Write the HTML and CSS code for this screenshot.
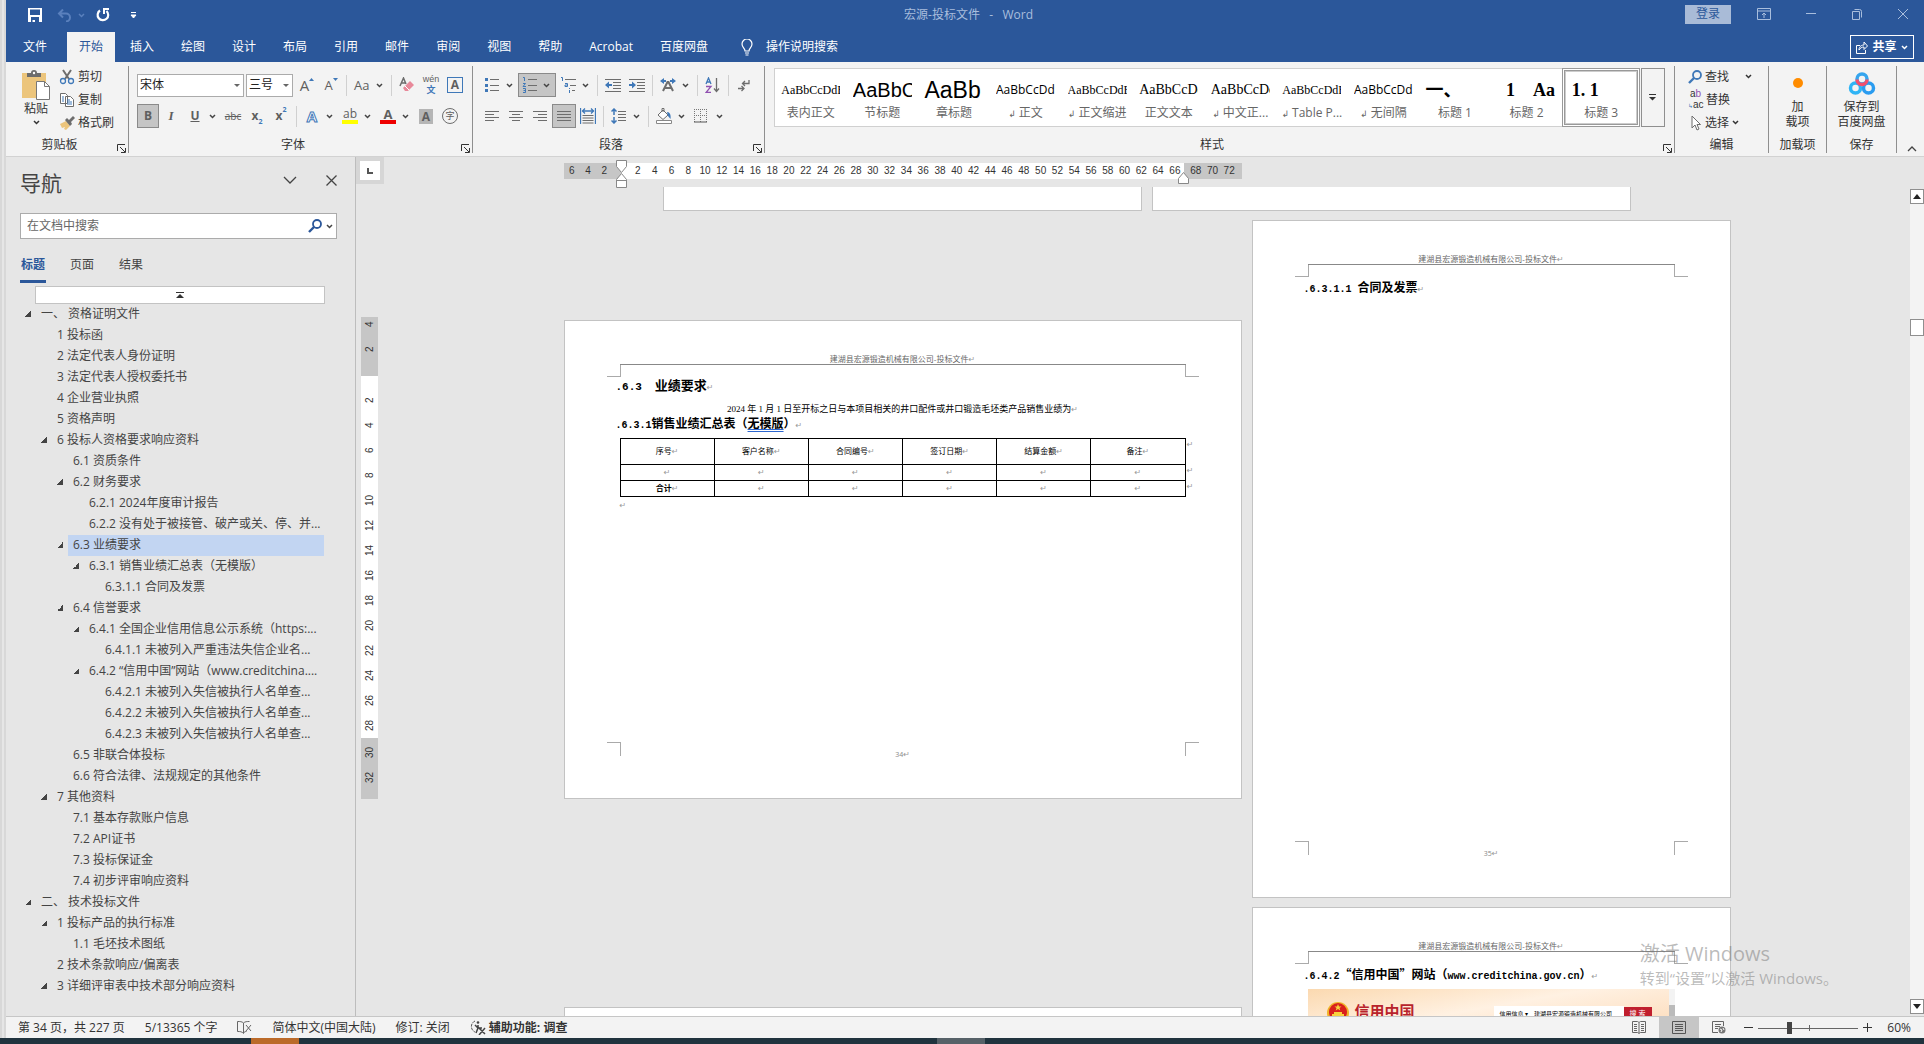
FILE: index.html
```html
<!DOCTYPE html>
<html lang="zh-CN">
  <head>
    <meta charset="UTF-8" />
    <meta name="viewport" content="width=device-width, initial-scale=1.0" />
    <title>宏源-投标文件 - Word</title>
    <link rel="stylesheet" href="styles.css">
  </head>
  <body>
    <!-- shared icons -->
    <svg class="sprite" aria-hidden="true">
      <symbol id="caret" viewBox="0 0 7 5"><path d="M1 1l2.500 2.500L6 1" fill="none" stroke="currentColor" stroke-width="1.500"/></symbol>
      <symbol id="launch" viewBox="0 0 9 9"><path d="M.5 7V.5H8M3 3l5 5M8.500 4v4.500H4" fill="none" stroke="#333"/></symbol>
      <symbol id="lens" viewBox="0 0 14 14"><circle cx="9" cy="5" r="4" fill="none" stroke="currentColor" stroke-width="1.800"/><path d="M6 8l-5 5" stroke="currentColor" stroke-width="2.400"/></symbol>
    </svg>

    <div class="app">
      <header class="titlebar">
        <div class="quick">
          <button type="button" class="qbtn save" aria-label="保存"><svg width="14" height="14" viewBox="0 0 14 14"><path d="M0 0h14v14H0zM2 1.500V7h10V1.500zM3 9v5h1.500v-2H7v2h4V9z" fill="#fff" fill-rule="evenodd"/></svg></button>
          <button type="button" class="qbtn undo" aria-label="撤消"><svg width="15" height="13" viewBox="0 0 15 13"><path d="M2 4.500h7a4 4 0 0 1 0 8M6 .5l-4 4 4 4" fill="none" stroke="currentColor" stroke-width="2"/></svg><svg width="7" height="5"><use href="#caret"/></svg></button>
          <button type="button" class="qbtn redo" aria-label="重复"><svg width="14" height="14" viewBox="0 0 14 14"><path d="M4 2.500A5.300 5.300 0 1 0 10.500 3" fill="none" stroke="#fff" stroke-width="2.200"/><path d="M7 0h6v2H9v4H7z" fill="#fff"/></svg></button>
          <button type="button" class="qbtn" aria-label="自定义快速访问工具栏"><svg width="7" height="7" viewBox="0 0 7 7"><path d="M1 .5h5M1 3h5L3.500 6z" fill="#fff" stroke="#fff"/></svg></button>
        </div>
        <h1 class="doc-name">宏源-投标文件&nbsp;&nbsp; -&nbsp;&nbsp; Word</h1>
        <div class="window-tools">
          <button type="button" class="login">登录</button>
          <button type="button" class="wbtn" aria-label="功能区显示选项"><svg width="14" height="12" viewBox="0 0 14 12"><path d="M.5.5h13v11H.5zM.5 3h13M7 10V5M5 7l2-2 2 2" fill="none" stroke="currentColor"/></svg></button>
          <button type="button" class="wbtn" aria-label="最小化"><svg width="12" height="12" viewBox="0 0 12 12"><path d="M1 5.500h10" stroke="currentColor"/></svg></button>
          <button type="button" class="wbtn" aria-label="还原"><svg width="12" height="12" viewBox="0 0 12 12"><path d="M1.500 3.500h7v8h-7zM3.500 1.500h5a2 2 0 0 1 2 2v6" fill="none" stroke="currentColor"/></svg></button>
          <button type="button" class="wbtn" aria-label="关闭"><svg width="12" height="12" viewBox="0 0 12 12"><path d="M1 1l10 10M11 1L1 11" stroke="currentColor"/></svg></button>
        </div>
      </header>

      <nav class="tabs">
        <button type="button" class="tab file">文件</button>
        <button type="button" class="tab active">开始</button>
        <button type="button" class="tab">插入</button>
        <button type="button" class="tab">绘图</button>
        <button type="button" class="tab">设计</button>
        <button type="button" class="tab">布局</button>
        <button type="button" class="tab">引用</button>
        <button type="button" class="tab">邮件</button>
        <button type="button" class="tab">审阅</button>
        <button type="button" class="tab">视图</button>
        <button type="button" class="tab">帮助</button>
        <button type="button" class="tab">Acrobat</button>
        <button type="button" class="tab">百度网盘</button>
        <button type="button" class="tell"><svg width="12" height="17" viewBox="0 0 12 17"><path d="M4 12c0-3-3-3.500-3-7a5 5 0 0 1 10 0c0 3.500-3 4-3 7zM4 14h4M4.500 16h3" fill="none" stroke="#fff" stroke-width="1.200"/></svg>操作说明搜索</button>
        <button type="button" class="share"><svg width="12" height="13" viewBox="0 0 12 13"><path d="M4 4.500H.5v8h9V9M3 9c0-4 3-5 5-5V1l3.500 4L8 8.500V6C6 6 4 7 3 9z" fill="none" stroke="#fff"/></svg>共享<svg width="7" height="5"><use href="#caret"/></svg></button>
      </nav>

      <section class="ribbon">
        <div class="group clipboard">
          <div class="group-body">
            <button type="button" class="big">
              <svg width="28" height="30" viewBox="0 0 28 30"><path d="M0 3h24v25H0z" fill="#ecc57c"/><path d="M5 7V3h4a3 3 0 0 1 6 0h4v4z" fill="#6d6d6d"/><circle cx="12" cy="3" r="1.200" fill="#fff"/><path d="M14.500 11.500h8l5 5v13h-13z" fill="#fff" stroke="#777"/><path d="M22.500 11.500v5h5" fill="none" stroke="#777"/></svg>
              <span>粘贴</span>
              <svg width="7" height="5"><use href="#caret"/></svg>
            </button>
            <div class="stack">
              <button type="button" class="line"><svg width="16" height="16" viewBox="0 0 16 16"><path d="M4 1l6 9M12 1L6 10" stroke="#6d6d6d" stroke-width="2"/><circle cx="4" cy="12" r="2.500" fill="none" stroke="#3f78b8" stroke-width="1.300"/><circle cx="12" cy="12" r="2.500" fill="none" stroke="#3f78b8" stroke-width="1.300"/></svg>剪切</button>
              <button type="button" class="line"><svg width="16" height="16" viewBox="0 0 16 16"><path d="M1.500 1.500h5l2 2v8h-7zM6.500 4.500h5l3 3v7h-8z" fill="#fff" stroke="#6d6d6d"/><path d="M3 5h2M3 7h2M3 9h2M8 8h3M8 10h5M8 12h5" stroke="#3f78b8"/></svg>复制</button>
              <button type="button" class="line"><svg width="16" height="16" viewBox="0 0 16 16"><path d="M1 9l6-3 4 5-4 4-2-1 1-2-3 1z" fill="#ecc57c"/><path d="M6 5l2-2 2 2 4-4 2 2-4 4 1 2-2 2z" fill="#6d6d6d"/></svg>格式刷</button>
            </div>
          </div>
          <div class="group-name"><span>剪贴板</span><svg class="launcher" width="9" height="9"><use href="#launch"/></svg></div>
        </div>

        <div class="group font">
          <div class="rows">
            <div class="row">
              <label class="combo wide"><select aria-label="字体"><option>宋体</option></select></label>
              <label class="combo"><select aria-label="字号"><option>三号</option></select></label>
              <button type="button" class="tool glyph" aria-label="增大字号">A<svg width="5" height="3" viewBox="0 0 5 3"><path d="M0 3l2.500-3L5 3z" fill="#3f78b8"/></svg></button>
              <button type="button" class="tool glyph small" aria-label="减小字号">A<svg width="5" height="3" viewBox="0 0 5 3"><path d="M0 0h5L2.500 3z" fill="#3f78b8"/></svg></button>
              <i class="sep"></i>
              <button type="button" class="tool drop" aria-label="更改大小写"><span class="case">Aa</span><svg width="7" height="5"><use href="#caret"/></svg></button>
              <i class="sep"></i>
              <button type="button" class="tool" aria-label="清除所有格式"><svg width="16" height="16" viewBox="0 0 16 16"><path d="M1 9l3.500-8L7 7M2.500 6h4" fill="none" stroke="#6d6d6d" stroke-width="1.500"/><path d="M4 11l7-7 4 4-6 6H6z" fill="#e8899a"/><path d="M6 9l4 4" stroke="#fff"/></svg></button>
              <button type="button" class="tool pinyin" aria-label="拼音指南"><span>wén</span><b>文</b></button>
              <button type="button" class="tool" aria-label="字符边框"><span class="boxed">A</span></button>
            </div>
            <div class="row">
              <button type="button" class="tool on bold">B</button>
              <button type="button" class="tool italic">I</button>
              <button type="button" class="tool drop"><span class="under">U</span><svg width="7" height="5"><use href="#caret"/></svg></button>
              <button type="button" class="tool strike">abc</button>
              <button type="button" class="tool script">x<sub>2</sub></button>
              <button type="button" class="tool script">x<sup>2</sup></button>
              <i class="sep"></i>
              <button type="button" class="tool drop"><span class="effect">A</span><svg width="7" height="5"><use href="#caret"/></svg></button>
              <button type="button" class="tool drop"><span class="ink mark">ab</span><svg width="7" height="5"><use href="#caret"/></svg></button>
              <button type="button" class="tool drop"><span class="ink red">A</span><svg width="7" height="5"><use href="#caret"/></svg></button>
              <button type="button" class="tool"><span class="shade">A</span></button>
              <button type="button" class="tool"><span class="ring">字</span></button>
            </div>
          </div>
          <div class="group-name"><span>字体</span><svg class="launcher" width="9" height="9"><use href="#launch"/></svg></div>
        </div>

        <div class="group para">
          <div class="rows">
            <div class="row">
              <button type="button" class="tool drop" aria-label="项目符号"><svg width="16" height="16" viewBox="0 0 16 16"><path d="M1 1h3v3H1zM1 7h3v3H1zM1 12h3v3H1z" fill="#3f78b8"/><path d="M6 2.500h9M6 8.500h9M6 13.500h9" stroke="#6d6d6d"/></svg><svg width="7" height="5"><use href="#caret"/></svg></button>
              <button type="button" class="tool drop on" aria-label="编号"><svg width="16" height="16" viewBox="0 0 16 16"><path d="M1 .5h1.500V4M1 6.500h2.500L1 9.500h3M1 11.500h2.500v4H1M1.500 13.500H3" fill="none" stroke="#3f78b8"/><path d="M6 2.500h9M6 8.500h9M6 13.500h9" stroke="#6d6d6d"/></svg><svg width="7" height="5"><use href="#caret"/></svg></button>
              <button type="button" class="tool drop" aria-label="多级列表"><svg width="16" height="16" viewBox="0 0 16 16"><path d="M1 .5h1.500V4M5 6.500h2.500v3H5v-1.500h2M9.500 11v1M9.500 13v3" fill="none" stroke="#3f78b8"/><path d="M5 2.500h11M10 8.500h6M12 13.500h3" stroke="#6d6d6d"/></svg><svg width="7" height="5"><use href="#caret"/></svg></button>
              <i class="sep"></i>
              <button type="button" class="tool" aria-label="减少缩进量"><svg width="16" height="14" viewBox="0 0 16 14"><path d="M0 1.500h16M8 4.500h8M8 7.500h8M8 10.500h8M0 13.500h16" stroke="#6d6d6d"/><path d="M0 7l4-3.500v2.500h3v2H4v2.500z" fill="#3f78b8"/></svg></button>
              <button type="button" class="tool" aria-label="增加缩进量"><svg width="16" height="14" viewBox="0 0 16 14"><path d="M0 1.500h16M8 4.500h8M8 7.500h8M8 10.500h8M0 13.500h16" stroke="#6d6d6d"/><path d="M7 7L3 3.500v2.500H0v2h3v2.500z" fill="#3f78b8"/></svg></button>
              <i class="sep"></i>
              <button type="button" class="tool drop" aria-label="中文版式"><svg width="16" height="14" viewBox="0 0 16 14"><path d="M3 13L7.500 4h1L13 13M5 10h6" fill="none" stroke="#6d6d6d" stroke-width="2"/><path d="M0 3l4-3v2h2v2H4v2zM16 3l-4-3v2h-2v2h2v2z" fill="#3f78b8"/></svg><svg width="7" height="5"><use href="#caret"/></svg></button>
              <i class="sep"></i>
              <button type="button" class="tool" aria-label="排序"><svg width="16" height="16" viewBox="0 0 16 16"><path d="M1 7l2.500-6L6 7M2 5h3" fill="none" stroke="#3f78b8" stroke-width="1.300"/><path d="M1 9.500h5l-5 6h5" fill="none" stroke="#9050b0" stroke-width="1.300"/><path d="M11.500 1v13M9 11.500l2.500 3 2.500-3" fill="none" stroke="#6d6d6d" stroke-width="1.300"/></svg></button>
              <i class="sep"></i>
              <button type="button" class="tool" aria-label="显示编辑标记"><svg width="12" height="13" viewBox="0 0 12 13"><path d="M11 1v3.500H4.500M7 2L4.500 4.500 7 7M0 9.500h6M3.500 7L6 9.500 3.500 12" fill="none" stroke="#6d6d6d" stroke-width="1.300"/></svg></button>
            </div>
            <div class="row">
              <button type="button" class="tool" aria-label="左对齐"><svg width="14" height="12" viewBox="0 0 14 12"><path d="M0 1.500h14M0 4.500h9M0 7.500h14M0 10.500h9" stroke="#6d6d6d"/></svg></button>
              <button type="button" class="tool" aria-label="居中"><svg width="14" height="12" viewBox="0 0 14 12"><path d="M0 1.500h14M3 4.500h8M0 7.500h14M3 10.500h8" stroke="#6d6d6d"/></svg></button>
              <button type="button" class="tool" aria-label="右对齐"><svg width="14" height="12" viewBox="0 0 14 12"><path d="M0 1.500h14M5 4.500h9M0 7.500h14M5 10.500h9" stroke="#6d6d6d"/></svg></button>
              <button type="button" class="tool on" aria-label="两端对齐"><svg width="14" height="12" viewBox="0 0 14 12"><path d="M0 1.500h14M0 4.500h14M0 7.500h14M0 10.500h14" stroke="#6d6d6d"/></svg></button>
              <button type="button" class="tool" aria-label="分散对齐"><svg width="16" height="16" viewBox="0 0 16 16"><path d="M.5 0v16M15.500 0v16M2 3h12M5 .5L2.500 3 5 5.500M11 .5L13.500 3 11 5.500" fill="none" stroke="#3f78b8" stroke-width="1.300"/><path d="M2.500 7.500h11M2.500 10h11M2.500 12.500h11M2.500 15h11" stroke="#6d6d6d"/></svg></button>
              <i class="sep"></i>
              <button type="button" class="tool drop" aria-label="行距"><svg width="16" height="16" viewBox="0 0 16 16"><path d="M3 1v6M3 9v6M.5 3.500L3 1l2.500 2.500M.5 12.500L3 15l2.500-2.500" fill="none" stroke="#3f78b8" stroke-width="1.500"/><path d="M7 3.500h8M7 6.500h8M7 9.500h8M7 12.500h8" stroke="#6d6d6d"/></svg><svg width="7" height="5"><use href="#caret"/></svg></button>
              <i class="sep"></i>
              <button type="button" class="tool drop" aria-label="底纹"><svg width="16" height="16" viewBox="0 0 16 16"><path d="M2 7l5-5 5 5-5 4.500zM6 4V.5h2V4" fill="#fff" stroke="#6d6d6d"/><path d="M11 4c3 0 4 3 3.500 7L12 8z" fill="#3f78b8"/><path d="M.5 12.500h15v3H.5z" fill="#fff" stroke="#888"/></svg><svg width="7" height="5"><use href="#caret"/></svg></button>
              <button type="button" class="tool drop" aria-label="边框"><svg width="14" height="14" viewBox="0 0 14 14"><path d="M.5 0v13M6.500 0v13M12.500 0v13M0 .5h13M0 6.500h13" stroke="#777" stroke-dasharray="1 1"/><path d="M0 13h13" stroke="#555"/></svg><svg width="7" height="5"><use href="#caret"/></svg></button>
            </div>
          </div>
          <div class="group-name"><span>段落</span><svg class="launcher" width="9" height="9"><use href="#launch"/></svg></div>
        </div>

        <div class="group styles">
          <div class="gallery">
            <button type="button" class="style"><span class="pv song">AaBbCcDdE</span><span>表内正文</span></button>
            <button type="button" class="style"><span class="pv section">AaBbC</span><span>节标题</span></button>
            <button type="button" class="style"><span class="pv chapter">AaBb</span><span>章标题</span></button>
            <button type="button" class="style"><span class="pv plain">AaBbCcDd</span><span><i class="para-mark">↲</i> 正文</span></button>
            <button type="button" class="style"><span class="pv song">AaBbCcDdE</span><span><i class="para-mark">↲</i> 正文缩进</span></button>
            <button type="button" class="style"><span class="pv times">AaBbCcDd</span><span>正文文本</span></button>
            <button type="button" class="style"><span class="pv times">AaBbCcDd</span><span><i class="para-mark">↲</i> 中文正...</span></button>
            <button type="button" class="style"><span class="pv song">AaBbCcDdE</span><span><i class="para-mark">↲</i> Table P...</span></button>
            <button type="button" class="style"><span class="pv plain">AaBbCcDd</span><span><i class="para-mark">↲</i> 无间隔</span></button>
            <button type="button" class="style"><span class="pv head">一、</span><span>标题 1</span></button>
            <button type="button" class="style"><span class="pv head">&nbsp; 1 &nbsp; &nbsp;Aa</span><span>标题 2</span></button>
            <button type="button" class="style chosen"><span class="pv head">1. 1</span><span>标题 3</span></button>
            <button type="button" class="more" aria-label="其他"><svg width="7" height="7" viewBox="0 0 7 7"><path d="M0 .5h7" stroke="#333"/><path d="M0 3h7L3.500 6.500z" fill="#333"/></svg></button>
          </div>
          <div class="group-name"><span>样式</span><svg class="launcher" width="9" height="9"><use href="#launch"/></svg></div>
        </div>

        <div class="group edit">
          <div class="group-body">
            <div class="stack">
              <button type="button" class="line"><svg class="blue" width="14" height="14"><use href="#lens"/></svg>查找<svg class="far" width="7" height="5"><use href="#caret"/></svg></button>
              <button type="button" class="line"><span class="replace"><b>a<i>b</i></b><b><i class="arrow">↳</i>ac</b></span>替换</button>
              <button type="button" class="line"><svg width="14" height="16" viewBox="0 0 14 16"><path d="M4 1v12l3-3 2 5 2-1-2-4.500h3.500z" fill="#fff" stroke="#6d6d6d"/></svg>选择<svg width="7" height="5"><use href="#caret"/></svg></button>
            </div>
          </div>
          <div class="group-name"><span>编辑</span></div>
        </div>
        <div class="group addin">
          <div class="group-body">
            <button type="button" class="big"><svg width="28" height="28" viewBox="0 0 28 28"><circle cx="14" cy="13" r="5" fill="#ff8c00"/></svg><span>加<br>载项</span></button>
          </div>
          <div class="group-name"><span>加载项</span></div>
        </div>
        <div class="group cloud">
          <div class="group-body">
            <button type="button" class="big"><svg width="28" height="28" viewBox="0 0 28 28"><g fill="none" stroke-width="3.500"><circle cx="14" cy="9" r="5" stroke="#35a5ee"/><circle cx="7.500" cy="18" r="5" stroke="#2fb4f5"/><circle cx="20.500" cy="18" r="5" stroke="#2a9cf0"/><path d="M9 9.500a5 5 0 0 0 10 0" stroke="#f2506e"/></g></svg><span>保存到<br>百度网盘</span></button>
          </div>
          <div class="group-name"><span>保存</span></div>
        </div>
        <button type="button" class="fold" aria-label="折叠功能区"><svg width="10" height="6" viewBox="0 0 10 6"><path d="M1 5l4-4 4 4" fill="none" stroke="#444" stroke-width="1.300"/></svg></button>
      </section>

      <main class="work">
        <aside class="nav">
          <div class="nav-head">
            <h2>导航</h2>
            <button type="button" aria-label="任务窗格选项"><svg width="14" height="8" viewBox="0 0 14 8"><path d="M1 1l6 6 6-6" fill="none" stroke="#444" stroke-width="1.300"/></svg></button>
            <button type="button" aria-label="关闭"><svg width="11" height="11" viewBox="0 0 11 11"><path d="M.5.5l10 10M10.500.5l-10 10" stroke="#444" stroke-width="1.300"/></svg></button>
          </div>
          <div class="search">
            <input type="text" placeholder="在文档中搜索" aria-label="在文档中搜索">
            <button type="button" aria-label="搜索"><svg width="14" height="14"><use href="#lens"/></svg><svg class="dark" width="7" height="5"><use href="#caret"/></svg></button>
          </div>
          <div class="nav-tabs">
            <button type="button" class="active">标题</button>
            <button type="button">页面</button>
            <button type="button">结果</button>
          </div>
          <button type="button" class="to-top" aria-label="跳转到开头"><svg width="8" height="7" viewBox="0 0 8 7"><path d="M0 .5h8" stroke="#333"/><path d="M0 6l4-4 4 4z" fill="#333"/></svg></button>
          <ul class="tree">
            <li class="l0 open">一、 资格证明文件</li>
            <li class="l1">1 投标函</li>
            <li class="l1">2 法定代表人身份证明</li>
            <li class="l1">3 法定代表人授权委托书</li>
            <li class="l1">4 企业营业执照</li>
            <li class="l1">5 资格声明</li>
            <li class="l1 open">6 投标人资格要求响应资料</li>
            <li class="l2">6.1 资质条件</li>
            <li class="l2 open">6.2 财务要求</li>
            <li class="l3">6.2.1 2024年度审计报告</li>
            <li class="l3">6.2.2 没有处于被接管、破产或关、停、并...</li>
            <li class="l2 open current">6.3 业绩要求</li>
            <li class="l3 open">6.3.1 销售业绩汇总表（无模版）</li>
            <li class="l4">6.3.1.1 合同及发票</li>
            <li class="l2 open">6.4 信誉要求</li>
            <li class="l3 open">6.4.1 全国企业信用信息公示系统（https:...</li>
            <li class="l4">6.4.1.1 未被列入严重违法失信企业名...</li>
            <li class="l3 open">6.4.2 “信用中国”网站（www.creditchina....</li>
            <li class="l4">6.4.2.1 未被列入失信被执行人名单查...</li>
            <li class="l4">6.4.2.2 未被列入失信被执行人名单查...</li>
            <li class="l4">6.4.2.3 未被列入失信被执行人名单查...</li>
            <li class="l2">6.5 非联合体投标</li>
            <li class="l2">6.6 符合法律、法规规定的其他条件</li>
            <li class="l1 open">7 其他资料</li>
            <li class="l2">7.1 基本存款账户信息</li>
            <li class="l2">7.2 API证书</li>
            <li class="l2">7.3 投标保证金</li>
            <li class="l2">7.4 初步评审响应资料</li>
            <li class="l0 open">二、 技术投标文件</li>
            <li class="l1 open">1 投标产品的执行标准</li>
            <li class="l2">1.1 毛坯技术图纸</li>
            <li class="l1">2 技术条款响应/偏离表</li>
            <li class="l1 open">3 详细评审表中技术部分响应资料</li>
          </ul>
        </aside>

        <div class="vcol">
          <div class="tab-stop"><i></i></div>
          <div class="vruler">
            <div class="off top"><span>4</span><span>2</span></div>
            <div class="on"><span>2</span><span>4</span><span>6</span><span>8</span><span>10</span><span>12</span><span>14</span><span>16</span><span>18</span><span>20</span><span>22</span><span>24</span><span>26</span><span>28</span></div>
            <div class="off bottom"><span>30</span><span>32</span></div>
          </div>
        </div>

        <div class="canvas">
          <div class="hruler-row">
            <div class="hruler">
              <div class="off left"><span>6</span><span>4</span><span>2</span></div>
              <div class="on"><span>2</span><span>4</span><span>6</span><span>8</span><span>10</span><span>12</span><span>14</span><span>16</span><span>18</span><span>20</span><span>22</span><span>24</span><span>26</span><span>28</span><span>30</span><span>32</span><span>34</span><span>36</span><span>38</span><span>40</span><span>42</span><span>44</span><span>46</span><span>48</span><span>50</span><span>52</span><span>54</span><span>56</span><span>58</span><span>60</span><span>62</span><span>64</span><span>66</span></div>
              <div class="off right"><span>68</span><span>70</span><span>72</span></div>
              <svg class="indent first" width="12" height="28" viewBox="0 0 12 28"><path d="M.5.500h10v6l-5 6-5-6zM.5 19.500l5-6 5 6v8H.5zM.5 20.500h10" fill="#fff" stroke="#888"/></svg>
              <svg class="indent last" width="12" height="12" viewBox="0 0 12 12"><path d="M.5 6.500l5-6 5 6v5H.5z" fill="#fff" stroke="#888"/></svg>
            </div>
          </div>

          <div class="spread cut">
            <article class="page tall"></article>
            <article class="page tall"></article>
          </div>

          <div class="spread">
            <article class="page wide">
              <div class="page-head">建湖县宏源锻造机械有限公司-投标文件<i>↵</i></div>
              <div class="corners"><b></b><b></b></div>
              <h3><span>.6.3</span> 业绩要求<i>↵</i></h3>
              <p>2024 年 1 月 1 日至开标之日与本项目相关的井口配件或井口锻造毛坯类产品销售业绩为<i>↵</i></p>
              <h4><span>.6.3.1</span>销售业绩汇总表（<u>无模版</u>）<i>↵</i></h4>
              <table>
                <thead>
                  <tr><th>序号<i>↵</i></th><th>客户名称<i>↵</i></th><th>合同编号<i>↵</i></th><th>签订日期<i>↵</i></th><th>结算金额<i>↵</i></th><th>备注<i>↵</i><i class="row-end">↵</i></th></tr>
                </thead>
                <tbody>
                  <tr><td><i>↵</i></td><td><i>↵</i></td><td><i>↵</i></td><td><i>↵</i></td><td><i>↵</i></td><td><i>↵</i><i class="row-end">↵</i></td></tr>
                  <tr><td><b>合计</b><i>↵</i></td><td><i>↵</i></td><td><i>↵</i></td><td><i>↵</i></td><td><i>↵</i></td><td><i>↵</i><i class="row-end">↵</i></td></tr>
                </tbody>
              </table>
              <div class="after"><i>↵</i></div>
              <div class="page-foot"><b></b><span>34<i>↵</i></span><b></b></div>
            </article>
            <article class="page tall">
              <div class="page-head">建湖县宏源锻造机械有限公司-投标文件<i>↵</i></div>
              <div class="corners"><b></b><b></b></div>
              <h4><span>.6.3.1.1 </span>合同及发票<i>↵</i></h4>
              <div class="page-foot"><b></b><span>35<i>↵</i></span><b></b></div>
            </article>
          </div>

          <div class="spread">
            <article class="page wide"></article>
            <article class="page tall">
              <div class="page-head">建湖县宏源锻造机械有限公司-投标文件<i>↵</i></div>
              <div class="corners"><b></b><b></b></div>
              <h4><span>.6.4.2</span>“信用中国”网站（<span>www.creditchina.gov.cn</span>）<i>↵</i></h4>
              <div class="banner">
                <svg width="24" height="24" viewBox="0 0 24 24"><circle cx="12" cy="12" r="11" fill="#f0b429"/><circle cx="12" cy="11" r="9" fill="#d9201c"/><path d="M12 3l1 2.500h2.500l-2 1.500.8 2.500L12 8l-2.300 1.500.8-2.500-2-1.500H11zM6 15h12v-2h-2v-2H8v2H6zM4 18h16l-3 4H7z" fill="#f7d23e"/></svg>
                <strong>信用中国</strong>
                <div class="bar"><span>信用信息 ▾</span><span>建湖县宏源锻造机械有限公司</span></div>
                <em>搜 索</em>
                <div class="bar-scroll"><i></i></div>
              </div>
            </article>
          </div>
        </div>

        <div class="scroll">
          <button type="button" aria-label="向上"><svg width="8" height="5" viewBox="0 0 8 5"><path d="M0 5l4-5 4 5z" fill="#222"/></svg></button>
          <div class="thumb"></div>
          <button type="button" aria-label="向下"><svg width="8" height="5" viewBox="0 0 8 5"><path d="M0 0l4 5 4-5z" fill="#222"/></svg></button>
        </div>

        <div class="activate"><strong>激活 Windows</strong><span>转到“设置”以激活 Windows。</span></div>
      </main>

      <footer class="status">
        <span>第 34 页，共 227 页</span>
        <span>5/13365 个字</span>
        <svg width="15" height="13" viewBox="0 0 15 13"><path d="M6.500 2C5 .5 3 .5.500.5v10c2.500 0 4.500 0 6 2zM6.500 2C8 .5 10 .5 12.500.5M6.500 12c1-1.500 2-1.500 3-1.500M9 4l5 6M14 4L9 10" fill="none" stroke="#666"/></svg>
        <span>简体中文(中国大陆)</span>
        <span>修订: 关闭</span>
        <span class="access"><svg width="16" height="15" viewBox="0 0 16 15"><path d="M5 1a6 6 0 0 0 0 11" fill="none" stroke="#555" stroke-dasharray="3 1"/><path d="M8 5v3M5 5l3 3h4M8 8l-2 5M8 7l7 7M15 8l-6 7" fill="none" stroke="#444" stroke-width="1.500"/><circle cx="8" cy="2.500" r="1.300" fill="#444"/></svg>辅助功能: 调查</span>
        <div class="views">
          <button type="button" aria-label="阅读视图"><svg width="14" height="13" viewBox="0 0 14 13"><path d="M7 1.500L5.500.5h-5v11h5l1.500 1 1.500-1h5V.5h-5zM7 2v10M2 3.500h3M2 5.500h3M2 7.500h3M2 9.500h3M9 3.500h3M9 5.500h3M9 7.500h3M9 9.500h3" fill="none" stroke="#666"/></svg></button>
          <button type="button" class="active" aria-label="页面视图"><svg width="14" height="13" viewBox="0 0 14 13"><path d="M.5.5h13v12H.5zM3 3.500h8M3 5.500h8M3 7.500h8M3 9.500h8" fill="none" stroke="#555"/></svg></button>
          <button type="button" aria-label="Web 版式视图"><svg width="14" height="13" viewBox="0 0 14 13"><path d="M6 11.500H.5V.5h11V5M3 3.500h6M3 5.500h5M3 7.500h3" fill="none" stroke="#666"/><circle cx="10" cy="9" r="3.500" fill="#777"/><path d="M8 8l2 1-1 2M11 7l1 2" stroke="#fff" fill="none"/></svg></button>
          <div class="zoom">
            <button type="button" aria-label="缩小"><svg width="9" height="9" viewBox="0 0 9 9"><path d="M0 4.500h9" stroke="#333"/></svg></button>
            <input type="range" min="10" max="190" value="64" aria-label="缩放">
            <button type="button" aria-label="放大"><svg width="9" height="9" viewBox="0 0 9 9"><path d="M0 4.500h9M4.500 0v9" stroke="#333"/></svg></button>
            <span>60%</span>
          </div>
        </div>
      </footer>
    </div>
    <div class="taskbar"><i class="running"></i><i class="hover"></i></div>
  </body>
</html>
```

FILE: styles.css
```css
* {
  box-sizing: border-box;
}
body {
  margin: 0;
  height: 100vh;
  display: flex;
  flex-direction: column;
  overflow: hidden;
  background: #bfbfbf;
  color: #333;
  font: 12px/16px "Open Sans", "Noto Sans CJK SC", sans-serif;
}
button {
  border: none;
  background: none;
  padding: 0;
  color: inherit;
  font: inherit;
}
i,
em {
  font-style: normal;
}
h1,
h2,
h3,
h4,
p,
ul {
  margin: 0;
  padding: 0;
  font-weight: normal;
}
svg {
  display: block;
  flex: none;
}
.sprite {
  position: absolute;
  width: 0;
  height: 0;
}
.app {
  flex: 1;
  min-height: 0;
  display: flex;
  flex-direction: column;
  border-left: 6px double #d8d8d8;
  background: #e6e6e6;
}

/* title bar */
.titlebar {
  display: flex;
  align-items: center;
  height: 30px;
  background: #2b579a;
  color: #a9bedd;
}
.quick,
.window-tools {
  flex: 1;
  display: flex;
  align-items: center;
}
.quick {
  padding-left: 22px;
}
.qbtn {
  display: flex;
  align-items: center;
  gap: 6px;
}
.save {
  margin-right: 15px;
}
.undo {
  color: #5a80bd;
  margin-right: 11px;
}
.redo {
  margin-right: 20px;
}
.doc-name {
  font-size: 12px;
}
.window-tools {
  justify-content: flex-end;
  padding: 0 15px 2px 0;
}
.login {
  width: 46px;
  height: 19px;
  margin-right: 26px;
  background: #a9bbd7;
  color: #2b579a;
}
.wbtn + .wbtn {
  margin-left: 34px;
}

/* tabs */
.tabs {
  display: flex;
  align-items: flex-end;
  gap: 3px;
  height: 32px;
  padding: 0 10px 0 5px;
  background: #2b579a;
  color: #fff;
}
.tab {
  height: 30px;
  padding: 0 12px;
}
.tab.file {
  margin-right: 5px;
}
.tab.active {
  background: #f3f3f3;
  color: #2b579a;
}
.tell {
  display: flex;
  align-items: center;
  gap: 13px;
  height: 30px;
  margin-left: 18px;
}
.share {
  display: flex;
  align-items: center;
  justify-content: center;
  gap: 4px;
  width: 64px;
  height: 24px;
  margin: 0 0 3px auto;
  border: 1px solid #fff;
  font-weight: bold;
}

/* ribbon */
.ribbon {
  display: flex;
  height: 95px;
  padding: 4px 0 3px;
  background: #f3f3f3;
  border-bottom: 1px solid #d2d2d2;
}
.group {
  display: flex;
  flex-direction: column;
  border-right: 1px solid #8f8f8f;
}
.group-body {
  flex: 1;
  display: flex;
}
.group-name {
  display: flex;
  justify-content: center;
  align-items: center;
  height: 16px;
  padding-right: 15px;
  position: relative;
}
.edit .group-name,
.addin .group-name,
.cloud .group-name {
  padding: 0;
}
.launcher {
  position: absolute;
  right: 2px;
  bottom: 0;
}
.clipboard {
  width: 123px;
}
.clipboard .group-body {
  padding-left: 13px;
}
.font {
  width: 344px;
}
.para {
  width: 292px;
}
.styles {
  flex: 1;
  min-width: 0;
}
.edit {
  width: 94px;
}
.addin {
  width: 58px;
}
.cloud {
  width: 70px;
}
.big {
  display: flex;
  flex-direction: column;
  align-items: center;
  width: 34px;
  padding-top: 4px;
  line-height: 15px;
}
.big span {
  padding-top: 1px;
}
.big span + svg {
  margin-top: 4px;
}
.addin .big,
.cloud .big {
  width: 100%;
}
.stack {
  display: flex;
  flex-direction: column;
  margin-top: -1px;
  padding-left: 6px;
}
.line {
  display: flex;
  align-items: center;
  gap: 3px;
  height: 23px;
}
.edit .stack {
  padding-left: 13px;
}
.blue {
  color: #3f78b8;
}
.far {
  margin-left: 13px;
}
.replace {
  width: 15px;
  font: 10px/11px "Liberation Sans", sans-serif;
}
.replace b {
  display: block;
  font-weight: normal;
}
.replace b i {
  color: #9050b0;
}
.replace .arrow {
  color: #3f78b8;
  font-size: 6px;
}
.rows {
  flex: 1;
  padding: 7px 0 0 8px;
}
.para .rows {
  padding-left: 7px;
}
.row {
  display: flex;
  align-items: center;
  height: 24px;
  margin-bottom: 7px;
}
.sep {
  width: 1px;
  height: 21px;
  margin: 0 3px;
  background: #d0d0d0;
}
.combo {
  position: relative;
  width: 47px;
  height: 23px;
  margin-right: 2px;
}
.combo.wide {
  width: 107px;
}
.combo select {
  appearance: none;
  width: 100%;
  height: 23px;
  padding: 0 2px;
  border: 1px solid #ababab;
  border-radius: 0;
  background: #fff;
  color: #222;
  font: inherit;
}
.combo::after {
  content: "";
  position: absolute;
  right: 4px;
  top: 10px;
  border: 3px solid transparent;
  border-top-color: #666;
}
.tool {
  display: flex;
  align-items: center;
  justify-content: center;
  width: 24px;
  height: 24px;
  color: #5f5f5f;
}
.tool.drop {
  justify-content: flex-start;
  width: 38px;
  padding-left: 4px;
}
.drop svg:last-child {
  margin-left: auto;
  margin-right: 5px;
  color: #444;
}
.tool.on {
  background: #c5c5c5;
  border: 1px solid #8a8a8a;
}
.drop.on {
  padding-left: 3px;
}
.drop.on svg:last-child {
  margin-right: 5px;
}
.glyph {
  font-size: 15px;
}
.glyph.small {
  font-size: 13px;
}
.glyph svg {
  align-self: flex-start;
  margin-top: 5px;
}
.case {
  font-size: 13px;
}
.pinyin {
  flex-direction: column;
  font: 9px/11px "Liberation Sans", "Noto Sans CJK SC", sans-serif;
}
.pinyin b {
  color: #3f78b8;
}
.boxed {
  width: 16px;
  height: 16px;
  border: 1px solid #3f78b8;
  font-weight: bold;
  line-height: 14px;
}
.bold {
  width: 22px;
  font-weight: bold;
}
.italic {
  font: italic bold 13px "Liberation Serif", serif;
}
.under {
  width: 16px;
  font-weight: bold;
  text-decoration: underline;
}
.strike {
  font-size: 10px;
  text-decoration: line-through;
}
.script {
  font-weight: bold;
}
.script sub,
.script sup {
  color: #3f78b8;
  font-size: 7px;
  line-height: 12px;
}
.script sub {
  align-self: flex-end;
}
.script sup {
  align-self: flex-start;
}
.effect {
  width: 16px;
  color: #fff;
  font-size: 15px;
  font-weight: bold;
  -webkit-text-stroke: 1px #3f78b8;
}
.ink {
  width: 16px;
  height: 16px;
  line-height: 12px;
  border-bottom: 4px solid #e00;
  font-weight: bold;
}
.ink.mark {
  border-color: #ff0;
  font-weight: normal;
}
.ink.red {
  font-size: 13px;
}
.shade {
  width: 14px;
  height: 15px;
  background: #b5b5b5;
  font-weight: bold;
}
.ring {
  width: 16px;
  height: 16px;
  border: 1px solid #6d6d6d;
  border-radius: 50%;
  font-size: 9px;
  line-height: 14px;
}

/* style gallery */
.gallery {
  flex: 1;
  display: flex;
  margin: 2px 9px 10px 9px;
}
.style {
  flex: 1;
  min-width: 0;
  display: flex;
  flex-direction: column;
  align-items: center;
  padding: 7px 6px 0;
  background: #fff;
  border: solid #d0d0d0;
  border-width: 1px 0;
  color: #666;
  white-space: nowrap;
}
.style:first-child {
  border-left-width: 1px;
}
.style.chosen {
  padding-top: 5px;
  border: 3px double #999;
  outline: 1px solid #ccc;
  outline-offset: -4px;
}
.pv {
  width: 59px;
  height: 29px;
  overflow: hidden;
  color: #000;
  line-height: 28px;
  text-align: left;
}
.song {
  font-family: "Liberation Serif", serif;
}
.times {
  font-family: "Liberation Serif", serif;
  font-size: 14px;
}
.plain {
  font-size: 12px;
}
.section {
  font-family: "Liberation Sans", sans-serif;
  font-size: 20px;
}
.chapter {
  font-family: "Liberation Sans", sans-serif;
  font-size: 23px;
}
.head {
  font: bold 18px/28px "Liberation Serif", "Noto Sans CJK SC", serif;
}
.para-mark {
  font: 9px "DejaVu Sans", sans-serif;
}
.more {
  display: flex;
  align-items: center;
  justify-content: center;
  width: 24px;
  margin-left: 1px;
  border: 1px solid #8f8f8f;
}
.fold {
  align-self: flex-end;
  padding: 0 7px 1px 10px;
}

/* work area */
.work {
  flex: 1;
  min-height: 0;
  display: flex;
  position: relative;
}
.nav {
  width: 350px;
  padding: 0 18px 0 14px;
  border-right: 1px solid #bdbdbd;
  color: #444;
}
.nav-head {
  display: flex;
  align-items: center;
  gap: 29px;
  height: 46px;
  margin-bottom: 10px;
}
.nav-head h2 {
  flex: 1;
  font-size: 21px;
  line-height: 46px;
  padding-top: 6px;
}
.search {
  display: flex;
  height: 26px;
  background: #fff;
  border: 1px solid #ababab;
}
.search input {
  flex: 1;
  padding: 0 6px;
  border: none;
  background: none;
  font: inherit;
}
.search input::placeholder {
  color: #666;
}
.search button {
  display: flex;
  align-items: center;
  gap: 4px;
  padding-right: 3px;
  color: #2b579a;
}
.search .dark {
  color: #444;
}
.nav-tabs {
  display: flex;
  gap: 23px;
  margin: 14px 0 3px;
}
.nav-tabs button {
  height: 30px;
  padding: 0 1px 4px;
  border-bottom: 3px solid transparent;
}
.nav-tabs .active {
  border-color: #2b579a;
  color: #2b579a;
  font-weight: bold;
}
.to-top {
  display: flex;
  align-items: center;
  justify-content: center;
  width: 290px;
  height: 18px;
  margin-left: 15px;
  border: 1px solid #c3c3c3;
  background: #fff;
}
.tree {
  list-style: none;
  width: 304px;
}
.tree li {
  position: relative;
  height: 21px;
  padding-left: 5px;
  line-height: 20px;
  white-space: nowrap;
}
.tree .l0 {
  margin-left: 16px;
}
.tree .l1 {
  margin-left: 32px;
}
.tree .l2 {
  margin-left: 48px;
}
.tree .l3 {
  margin-left: 64px;
}
.tree .l4 {
  margin-left: 80px;
}
.tree .current {
  background: #c2d5f2;
}
.tree .open::before {
  content: "";
  position: absolute;
  left: -11px;
  top: 7px;
  width: 6px;
  height: 6px;
  background: linear-gradient(135deg, transparent 50%, #444 50%);
}

/* rulers */
.vcol {
  width: 28px;
}
.tab-stop {
  display: flex;
  align-items: center;
  justify-content: center;
  height: 27px;
  border: 4px solid #d6d6d6;
  background: #fff;
}
.tab-stop i {
  width: 6px;
  height: 6px;
  border: solid #555;
  border-width: 0 0 2px 2px;
}
.vruler {
  width: 17px;
  margin: 133px 0 0 5px;
}
.vruler div {
  display: flex;
  flex-direction: column;
  overflow: hidden;
}
.vruler span {
  flex: none;
  height: 25px;
  font: 10px/17px "Liberation Sans", sans-serif;
  text-align: center;
  writing-mode: vertical-rl;
  transform: rotate(180deg);
}
.off {
  background: #c6c6c6;
}
.on {
  background: #fff;
}
.vruler .top {
  height: 59px;
  justify-content: flex-end;
  padding-bottom: 14px;
}
.vruler .on {
  padding-top: 12px;
}
.vruler .bottom {
  height: 61px;
  padding-top: 2px;
}
.hruler-row {
  flex: none;
  display: flex;
  width: 1167px;
  height: 30px;
  padding-top: 6px;
}
.hruler {
  display: flex;
  position: relative;
  width: 678px;
  height: 16px;
}
.hruler div {
  display: flex;
}
.hruler span {
  flex: 1 1 0;
  min-width: 0;
  font: 10px/16px "Liberation Sans", sans-serif;
  display: flex;
  justify-content: center;
}
.hruler .left {
  width: 57px;
  padding-right: 8px;
}
.hruler .on {
  flex: 1;
  padding-left: 9px;
}
.hruler .right {
  width: 58px;
  padding: 0 4px;
}
.indent {
  position: absolute;
}
.indent.first {
  left: 52px;
  top: -3px;
}
.indent.last {
  right: 52px;
  top: 9px;
}

/* pages */
.canvas {
  flex: 1;
  min-width: 0;
  display: flex;
  flex-direction: column;
  align-items: center;
  overflow: hidden;
}
.spread {
  flex: none;
  display: flex;
  align-items: center;
  gap: 10px;
  margin-bottom: 9px;
}
.spread.cut {
  height: 24px;
  align-items: flex-end;
  overflow: hidden;
}
.page {
  display: flex;
  flex-direction: column;
  padding: 0 55px;
  background: #fff;
  border: 1px solid #c3c3c3;
  color: #000;
}
.page.tall {
  width: 479px;
  height: 678px;
}
.page.wide {
  width: 678px;
  height: 479px;
}
.page i {
  color: #999;
  font: 8px/8px "DejaVu Sans", sans-serif;
}
.page-head {
  height: 44px;
  padding-top: 33px;
  border-bottom: 1px solid #888;
  color: #666;
  font-size: 8px;
  line-height: 10px;
  text-align: center;
}
.corners,
.page-foot {
  display: flex;
  justify-content: space-between;
  margin: 0 -13px;
}
.corners b,
.page-foot b {
  width: 14px;
  height: 12px;
  border: solid #aaa;
  border-width: 0 1px 1px 0;
}
.corners b:last-child {
  border-width: 0 0 1px 1px;
}
.page-foot {
  height: 56px;
  margin-top: auto;
}
.page-foot b {
  height: 14px;
  border-width: 1px 1px 0 0;
}
.page-foot b:last-child {
  border-width: 1px 0 0 1px;
}
.page-foot span {
  padding-top: 8px;
  color: #888;
  font-size: 7px;
  line-height: 10px;
}
.page h3,
.page h4 {
  height: 16px;
  margin-left: -4px;
  font: bold 12px/16px "Noto Sans CJK SC", sans-serif;
  white-space: pre;
}
.page h3 {
  font-size: 13px;
}
.page h3 span,
.page h4 span {
  font-family: "Liberation Mono", monospace;
  font-size: 10px;
}
.page h3 span {
  margin-right: 10px;
  font-size: 11px;
}
.page .corners + h4 {
  margin-top: 2px;
}
.page u {
  text-decoration: underline double #2b66d0;
}
.page p {
  padding-top: 10px;
  font: 9px/12px "Liberation Serif", "Noto Sans CJK SC", serif;
  text-align: center;
}
.page table {
  width: 100%;
  margin-top: 7px;
  border-collapse: collapse;
  table-layout: fixed;
}
.page th,
.page td {
  position: relative;
  height: 16px;
  padding: 0;
  border: 1px solid #000;
  font-size: 8px;
  font-weight: normal;
  line-height: 10px;
  text-align: center;
}
.page th {
  height: 26px;
}
.page .row-end {
  position: absolute;
  top: 2px;
  right: -9px;
}
.after {
  line-height: 14px;
}
.banner {
  display: flex;
  height: 60px;
  margin-top: 7px;
  padding: 12px 0 0 18px;
  background: linear-gradient(170deg, #fbd9b0, #fff1e2 40%, #fbd3ab);
}
.banner strong {
  margin-left: 5px;
  color: #b8232c;
  font-size: 15px;
  line-height: 20px;
}
.bar {
  display: flex;
  gap: 6px;
  width: 130px;
  height: 22px;
  margin: 5px 0 0 auto;
  padding: 0 6px;
  background: #fff;
  font-size: 6px;
  line-height: 16px;
  white-space: nowrap;
}
.banner em {
  width: 28px;
  height: 22px;
  margin: 6px 17px 0 0;
  background: #c01f2e;
  color: #fff;
  font-size: 7px;
  line-height: 14px;
  text-align: center;
}
.bar-scroll {
  width: 6px;
  margin-top: -12px;
  padding-top: 16px;
  background: #f3f3f3;
}
.bar-scroll i {
  display: block;
  height: 40px;
  background: #bbb;
}

/* scroll bar */
.scroll {
  display: flex;
  flex-direction: column;
  width: 14px;
  margin: 32px 0 2px;
  background: #f3f3f3;
}
.scroll button {
  display: flex;
  align-items: center;
  justify-content: center;
  height: 15px;
  border: 1px solid #8f8f8f;
  background: #fff;
}
.thumb {
  height: 17px;
  margin: 115px 0 auto;
  border: 1px solid #8f8f8f;
  background: #fff;
}
.activate {
  position: absolute;
  right: 86px;
  bottom: 26px;
  display: flex;
  flex-direction: column;
  color: rgba(120, 120, 120, 0.5);
  font-size: 15px;
  line-height: 24px;
}
.activate strong {
  font-size: 20px;
  font-weight: normal;
}

/* status bar */
.status {
  display: flex;
  align-items: center;
  gap: 20px;
  height: 22px;
  padding-left: 12px;
  background: #f3f3f3;
  border-top: 1px solid #c6c6c6;
}
.access {
  display: flex;
  gap: 3px;
  font-weight: bold;
}
.views {
  display: flex;
  height: 21px;
  margin-left: auto;
}
.views > button {
  display: flex;
  align-items: center;
  justify-content: center;
  width: 40px;
}
.views .active {
  background: #c6c6c6;
}
.zoom {
  display: flex;
  align-items: center;
  gap: 5px;
  padding: 0 13px 0 5px;
}
.zoom span {
  width: 34px;
  text-align: right;
}
.zoom input {
  appearance: none;
  width: 100px;
  height: 14px;
  margin: 0;
  background: linear-gradient(#666, #666) 51px 4px / 1px 6px no-repeat,
    linear-gradient(#666, #666) 0 7px / 100% 1px no-repeat;
}
.zoom input::-webkit-slider-thumb {
  appearance: none;
  width: 5px;
  height: 12px;
  background: #444;
}
.taskbar {
  display: flex;
  height: 6px;
  padding-left: 251px;
  background: #20333e;
}
.running {
  width: 48px;
  background: #bb6a29;
}
.hover {
  width: 48px;
  margin-left: 638px;
  background: #566168;
}
```
